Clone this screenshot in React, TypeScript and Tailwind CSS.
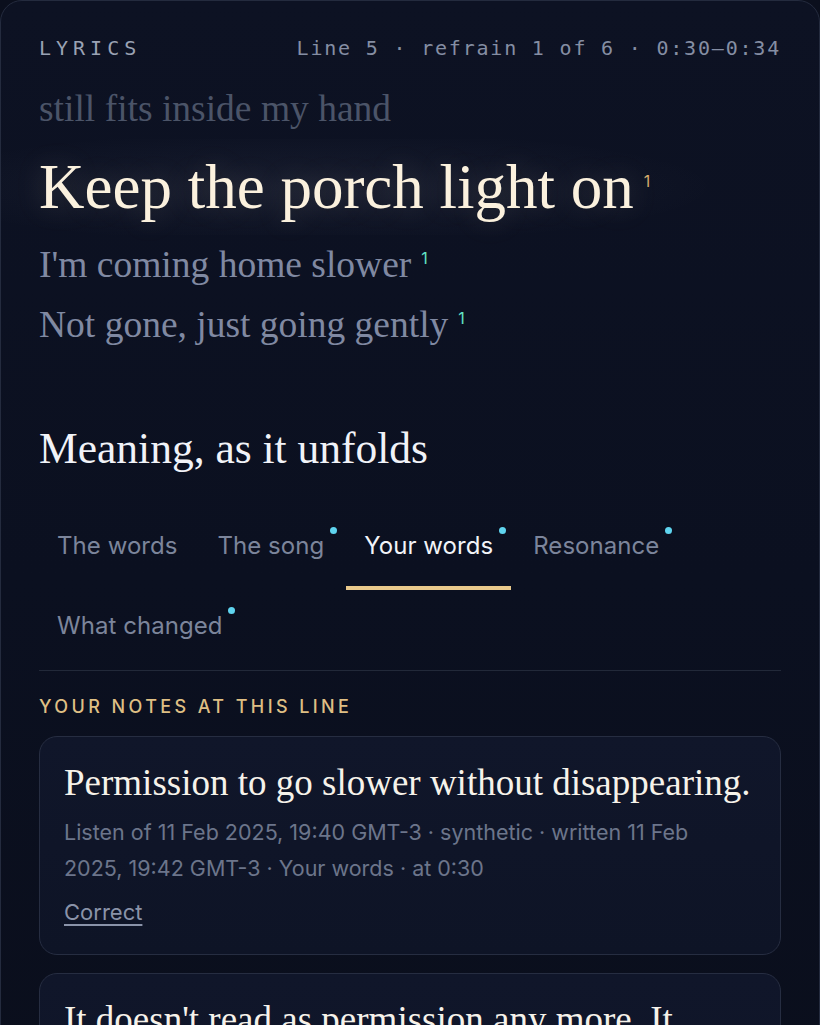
import type { ReactNode } from 'react'

const serif = "font-['Liberation_Serif',serif]"
const sans = "font-['Inter',sans-serif]"
const mono = "font-['DejaVu_Sans_Mono',monospace]"

interface TabProps {
  label: string
  active?: boolean
  dot?: boolean
}

function Tab({ label, active, dot }: TabProps) {
  return (
    <button
      className={`px-[18px] pt-[20px] pb-[24px] border-b-4 text-[24px] leading-[32px] tracking-[0.05px] ${
        active ? 'border-[#e9c98c] text-[#f2f4f8]' : 'border-transparent text-[#7c859b]'
      }`}
    >
      <span className="relative inline-block">
        {label}
        {dot && (
          <span className="absolute -right-[13px] -top-[3px] w-[7px] h-[7px] rounded-full bg-[#5fd4ef]" />
        )}
      </span>
    </button>
  )
}

function Sup({ children, color, top }: { children: ReactNode; color: string; top: string }) {
  return (
    <sup className={`${sans} ml-[10px] text-[16px] ${color} ${top}`}>{children}</sup>
  )
}

interface Note {
  text: string
  meta: string
}

const notes: Note[] = [
  {
    text: 'Permission to go slower without disappearing.',
    meta: 'Listen of 11 Feb 2025, 19:40 GMT-3 · synthetic · written 11 Feb 2025, 19:42 GMT-3 · Your words · at 0:30',
  },
  {
    text: "It doesn't read as permission any more. It reads like a promise I made to myself.",
    meta: 'Listen of 3 Mar 2025, 08:12 GMT-3 · synthetic · written 3 Mar 2025, 08:15 GMT-3 · Your words · at 0:31',
  },
]

export default function App() {
  return (
    <div className="min-h-screen bg-[#0b0f1d]">
      <div className="rounded-t-[22px] border border-[#242b3e] bg-[linear-gradient(180deg,#0d1223_0%,#0b1020_45%,#0a0e1b_100%)] px-[38px] pt-[33px] pb-10">
        <div className={`${mono} flex items-center justify-between text-[20px] leading-[28px]`}>
          <span className="tracking-[5px] text-[#9aa2b4]">LYRICS</span>
          <span className="tracking-[1.8px] text-[#858ea3]">Line 5 · refrain 1 of 6 · 0:30–0:34</span>
        </div>

        <div className={`${serif} mt-[17px]`}>
          <p className="text-[37.5px] leading-[60px] text-[#4b5468]">still fits inside my hand</p>
          <div className="-mx-[38px] px-[38px] bg-[radial-gradient(ellipse_50%_60%_at_38%_50%,rgba(190,200,230,0.06),transparent)]">
            <p className="text-[63px] leading-[96px] text-[#fbf1de] [text-shadow:0_0_30px_rgba(255,232,196,0.18)]">
              Keep the porch light on
              <Sup color="text-[#d6aa6c]" top="top-[-21px]">1</Sup>
            </p>
          </div>
          <p className="text-[37.5px] leading-[60px] text-[#8089a2]">
            I'm coming home slower
            <Sup color="text-[#62e3c6]" top="top-[-13px]">1</Sup>
          </p>
          <p className="text-[37.5px] leading-[60px] text-[#8089a2]">
            Not gone, just going gently
            <Sup color="text-[#62e3c6]" top="top-[-13px]">1</Sup>
          </p>
        </div>

        <h2 className={`${serif} mt-[67px] text-[43.5px] leading-[52px] text-[#f1f3f8]`}>
          Meaning, as it unfolds
        </h2>

        <div className={`${sans} mt-[36px] flex flex-wrap gap-x-[4px] border-b border-[#222939]`}>
          <Tab label="The words" />
          <Tab label="The song" dot />
          <Tab label="Your words" active dot />
          <Tab label="Resonance" dot />
          <Tab label="What changed" dot />
        </div>

        <p className={`${sans} mt-[24px] text-[18px] leading-[24px] font-medium tracking-[3.4px] text-[#dfbf84]`}>
          YOUR NOTES AT THIS LINE
        </p>

        <div className="mt-[17px] flex flex-col gap-[18px]">
          {notes.map((n) => (
            <div
              key={n.text}
              className="rounded-[18px] border border-[#262d41] bg-[linear-gradient(180deg,#10162a,#0e1426)] px-[24px] pt-[22px] pb-[28px]"
            >
              <p className={`${serif} text-[37px] leading-[47px] text-[#f6f2ea]`}>{n.text}</p>
              <p className={`${sans} mt-[8px] max-w-[660px] text-[21.5px] leading-[36px] text-[#6c758b]`}>{n.meta}</p>
              <button className={`${sans} mt-[12px] text-[22px] leading-[28px] text-[#8a93a9] underline underline-offset-4`}>
                Correct
              </button>
            </div>
          ))}
        </div>
      </div>
    </div>
  )
}
